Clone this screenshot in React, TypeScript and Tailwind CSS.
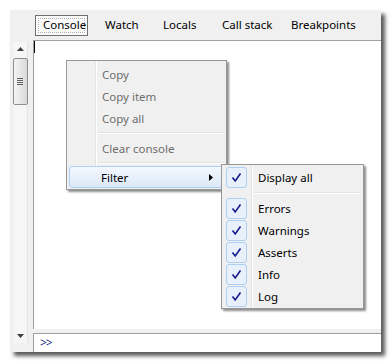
import React from 'react'

const tabs = [
  { label: 'Console', w: 'w-[63px]', active: true },
  { label: 'Watch', w: 'w-[58px]' },
  { label: 'Locals', w: 'w-[59px]' },
  { label: 'Call stack', w: 'w-[69px]' },
  { label: 'Breakpoints', w: 'w-[80px]' },
]

function Check() {
  return (
    <div className='w-[21px] h-[21px] rounded-[3px] border border-[#aecff0] bg-[#e8f0fb] flex items-center justify-center'>
      <svg width='11' height='11' viewBox='0 0 11 11'>
        <path d='M1.5 5.5 L4.2 9 L9.5 1.5' fill='none' stroke='#141a8c' strokeWidth='1.6' />
      </svg>
    </div>
  )
}

function SubItem({ label }: { label: string }) {
  return (
    <div className='flex items-center h-[22px]'>
      <div className='w-[30px] flex items-center pl-[3px]'><Check /></div>
      <span className='pl-[5px] pt-[1px] text-black'>{label}</span>
    </div>
  )
}

export default function App() {
  return (
    <div className='relative w-[391px] h-[362px] bg-white pt-[10px] pl-[10px] text-[11.5px] overflow-hidden' style={{ fontFamily: '"Noto Sans", "Open Sans", sans-serif' }}>
      {/* window */}
      <div className='w-[371px] h-[342px] bg-[#f0f0f0] flex flex-col shadow-[4px_4px_4px_rgba(0,0,0,0.65)]'>
        {/* tab bar */}
        <div className='h-[30px] flex items-center pl-[25px]'>
          {tabs.map(t => (
            <div key={t.label} className={`${t.w} h-[21px] flex items-center`}>
              {t.active ? (
                <div className='w-[53px] h-[21px] border border-[#707070] bg-[#fafafa] p-[2px]'>
                  <div className='w-full h-full border border-dotted border-[#b0b0b0] flex items-center pl-[4px] text-black'>{t.label}</div>
                </div>
              ) : (
                <span className='pl-[7px] text-black'>{t.label}</span>
              )}
            </div>
          ))}
        </div>

        <div className='flex flex-1'>
          {/* scrollbar column */}
          <div className='w-[23px] pl-[3px] pt-[2px]'>
            <div className='w-[15px] h-[301px] bg-[#f6f6f6] border-r border-[#e4e4e4] flex flex-col items-center'>
              <div className='h-[14px] flex items-center justify-center'>
                <svg width='7' height='4' viewBox='0 0 7 4'><path d='M0 4 L3.5 0 L7 4 Z' fill='#404040' /></svg>
              </div>
              <div className='mt-[2px] w-[15px] h-[47px] rounded-[2px] border border-[#8e8f8f] bg-gradient-to-r from-[#f4f4f4] to-[#d9d9d9] flex flex-col items-center justify-center gap-[1px]'>
                <div className='w-[6px] h-[1px] bg-[#606060]' />
                <div className='w-[6px] h-[1px] bg-[#606060]' />
                <div className='w-[6px] h-[1px] bg-[#606060]' />
                <div className='w-[6px] h-[1px] bg-[#606060]' />
              </div>
              <div className='flex-1' />
              <div className='h-[14px] flex items-center justify-center'>
                <svg width='7' height='4' viewBox='0 0 7 4'><path d='M0 0 L3.5 4 L7 0 Z' fill='#404040' /></svg>
              </div>
            </div>
          </div>

          {/* console */}
          <div className='flex-1 flex flex-col'>
            <div className='flex-1 bg-white border-t border-l border-[#a0a0a0]'>
              <div className='w-[1px] h-[12px] bg-black' />
            </div>
            <div className='h-[4px]' />
            <div className='h-[19px] bg-white border-t border-l border-[#a0a0a0] flex items-center pl-[6px] text-[#1c2f8a] text-[12px] tracking-[-1px]'>&gt;&gt;</div>
          </div>
        </div>
      </div>

      {/* context menu */}
      <div className='absolute left-[66px] top-[60px] w-[161px] h-[130px] bg-[#f0f0f0] border border-[#979797] shadow-[2px_2px_2px_rgba(0,0,0,0.45)] pt-[2px] px-[2px]'>
        <div className='absolute left-[28px] top-0 bottom-0 w-[2px] border-l border-[#e2e3e3] border-r-white' style={{ borderRightWidth: 1, borderRightStyle: 'solid' }} />
        <div className='relative flex flex-col text-[#6d6d6d]'>
          <div className='h-[22px] flex items-center pt-[1px] pl-[33px]'>Copy</div>
          <div className='h-[22px] flex items-center pt-[1px] pl-[33px]'>Copy item</div>
          <div className='h-[22px] flex items-center pt-[1px] pl-[33px]'>Copy all</div>
          <div className='h-[8px] flex items-center pl-[29px]'><div className='w-full h-[2px] border-t border-[#e2e3e3] border-b border-b-white' /></div>
          <div className='h-[22px] flex items-center pt-[1px] pl-[33px]'>Clear console</div>
          <div className='h-[7px] flex items-center pl-[29px]'><div className='w-full h-[2px] border-t border-[#e2e3e3] border-b border-b-white' /></div>
          <div className='h-[22px] flex items-center pl-[31px] pr-[10px] pt-[1px] rounded-[3px] border border-[#aecff7] bg-gradient-to-b from-[#f3f8fd] to-[#dce9f8] text-black justify-between'>
            <span>Filter</span>
            <svg width='4' height='7' viewBox='0 0 4 7'><path d='M0 0 L4 3.5 L0 7 Z' fill='#000' /></svg>
          </div>
        </div>
      </div>

      {/* submenu */}
      <div className='absolute left-[221px] top-[164px] w-[143px] h-[145px] bg-[#f0f0f0] border border-[#979797] shadow-[2px_2px_2px_rgba(0,0,0,0.45)] pt-[1px] px-[1px]'>
        <div className='absolute left-[29px] top-0 bottom-0 w-[2px] border-l border-[#e2e3e3] border-r-white' style={{ borderRightWidth: 1, borderRightStyle: 'solid' }} />
        <div className='relative flex flex-col'>
          <SubItem label='Display all' />
          <div className='h-[9px] flex items-center pl-[31px] pr-[1px]'><div className='w-full h-[2px] border-t border-[#e2e3e3] border-b border-b-white' /></div>
          <SubItem label='Errors' />
          <SubItem label='Warnings' />
          <SubItem label='Asserts' />
          <SubItem label='Info' />
          <SubItem label='Log' />
        </div>
      </div>
    </div>
  )
}
